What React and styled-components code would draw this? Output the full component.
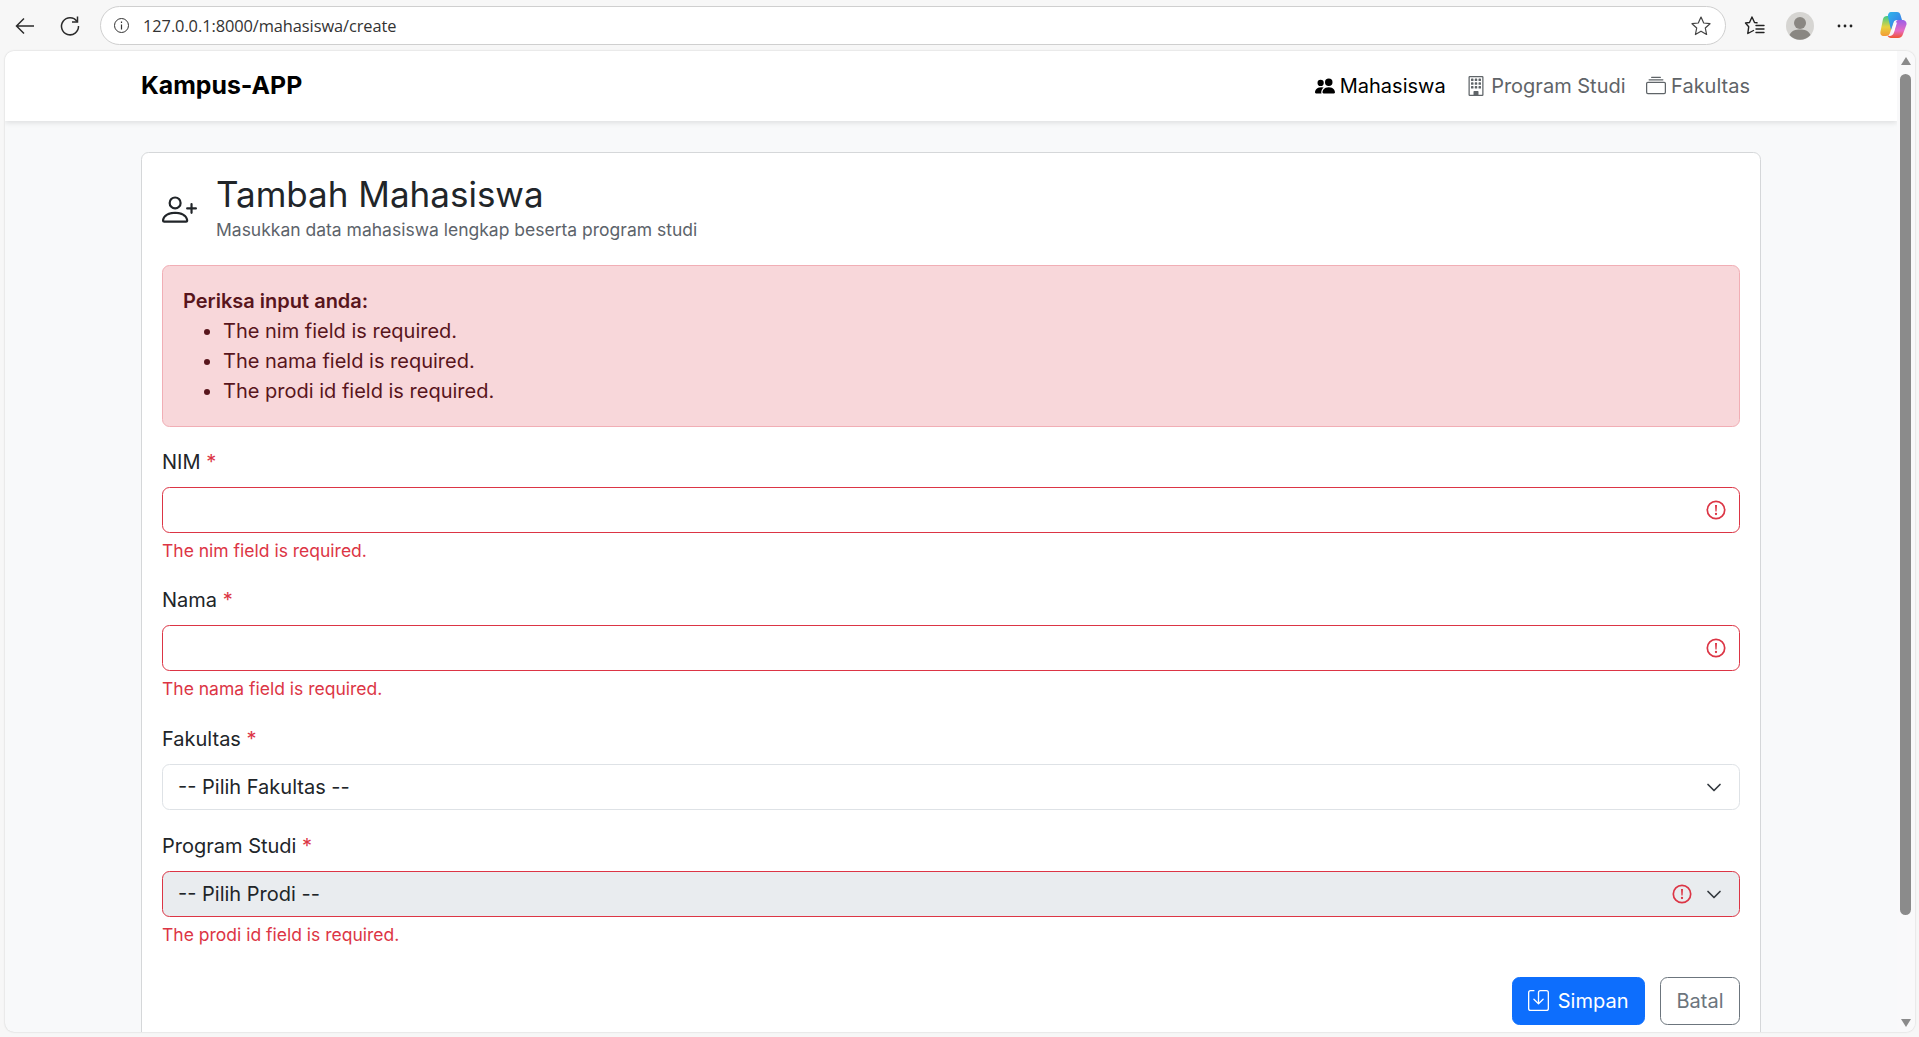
import React from 'react';
import styled, { createGlobalStyle } from 'styled-components';
import { BsPeopleFill, BsBuilding, BsCollection, BsPersonPlus, BsSave } from 'react-icons/bs';

const GlobalStyle = createGlobalStyle`
  html, body {
    margin: 0;
    height: 100%;
    overflow: hidden;
    background: #f7f7f7;
    font-family: Inter, "Liberation Sans", sans-serif;
    color: #212529;
  }
  * { box-sizing: border-box; }
`;

const Browser = styled.div`
  height: 100vh;
  display: flex;
  flex-direction: column;
  background: #f7f7f7;
`;

const Toolbar = styled.div`
  height: 51px;
  flex: none;
  display: flex;
  align-items: center;
  padding: 0 12px 0 13px;
`;

const ToolIcon = styled.span`
  display: flex;
  align-items: center;
  justify-content: center;
  flex: none;
  width: ${({ $w }) => $w || 24}px;
  margin-left: ${({ $ml }) => $ml || 0}px;
  color: #2b2b2b;
`;

const AddressBar = styled.div`
  flex: 1;
  height: 39px;
  margin-left: 18px;
  border: 1px solid #cfcfcf;
  border-radius: 20px;
  background: #fff;
  display: flex;
  align-items: center;
  padding: 0 12px 0 10px;
`;

const Url = styled.span`
  flex: 1;
  margin-left: 12px;
  font-family: "Open Sans", Roboto, sans-serif;
  font-size: 16.4px;
  letter-spacing: -0.08px;
  color: #333;
`;

const Viewport = styled.div`
  flex: 1;
  min-height: 0;
  margin: 0 4px 5px 5px;
  border-radius: 9px;
  overflow: hidden;
  display: flex;
  background: #f8f9fa;
  box-shadow: 0 0 2px rgba(0, 0, 0, 0.2);
`;

const Page = styled.div`
  flex: 1;
  min-width: 0;
  overflow: hidden;
`;

const Navbar = styled.nav`
  height: 70px;
  background: #fff;
  box-shadow: 0 2px 5px rgba(0, 0, 0, 0.1);
`;

const NavInner = styled.div`
  width: 1620px;
  height: 100%;
  margin: 0 auto;
  padding-right: 11px;
  display: flex;
  align-items: center;
  justify-content: space-between;
`;

const Brand = styled.div`
  font-size: 24.8px;
  font-weight: 700;
  color: #000;
  transform: translateY(-1px);
`;

const NavLinks = styled.div`
  display: flex;
  align-items: center;
  gap: 20.5px;
`;

const NavLink = styled.a`
  display: flex;
  align-items: center;
  gap: 5px;
  font-size: 20px;
  color: ${({ $active }) => ($active ? '#000' : '#5f6468')};
  svg { width: 20px; height: 20px; }
`;

const Main = styled.main`
  width: 1620px;
  margin: 31px auto 0;
  background: #fff;
  border: 1px solid #d5d7d9;
  border-radius: 7.5px;
  padding: 20px;
`;

const Heading = styled.div`
  display: flex;
  align-items: center;
  gap: 19px;
  margin-bottom: 21.5px;
  svg { width: 35px; height: 35px; margin-top: 3px; color: #212529; flex: none; }
`;

const Title = styled.h1`
  margin: 0 0 2px;
  font-size: 35px;
  line-height: 42px;
  font-weight: 400;
`;

const Subtitle = styled.div`
  font-size: 17.5px;
  line-height: 26.25px;
  color: #5c636a;
`;

const Alert = styled.div`
  background: #f8d7da;
  border: 1px solid #f1aeb5;
  border-radius: 7.5px;
  padding: 20px;
  color: #58151c;
  font-size: 20px;
  line-height: 30px;
  margin-bottom: 20px;
  strong { font-weight: 600; }
  ul { margin: 0; padding-left: 40px; }
`;

const Group = styled.div`
  margin-bottom: ${({ $mb }) => $mb ?? 20}px;
`;

const Label = styled.label`
  display: block;
  font-size: 20px;
  line-height: 30px;
  margin-bottom: 10px;
  span { color: #dc3545; }
`;

const FieldWrap = styled.div`
  position: relative;
  height: 46.5px;
`;

const TextInput = styled.input`
  display: block;
  width: 100%;
  height: 100%;
  border: 1px solid #dc3545;
  border-radius: 7.5px;
  background: #fff;
  outline: none;
  font: inherit;
`;

const Select = styled.select`
  display: block;
  width: 100%;
  height: 100%;
  appearance: none;
  padding: 0 15px;
  border: 1px solid ${({ $invalid }) => ($invalid ? '#dc3545' : '#dee2e6')};
  border-radius: 7.5px;
  background: ${({ disabled }) => (disabled ? '#e9ecef' : '#fff')};
  color: #212529;
  opacity: 1;
  outline: none;
  font-family: inherit;
  font-size: 20px;
`;

const Overlay = styled.span`
  position: absolute;
  top: 50%;
  right: ${({ $right }) => $right}px;
  transform: translateY(-50%);
  display: flex;
  pointer-events: none;
`;

const ErrorText = styled.div`
  margin-top: 5px;
  font-size: 17.5px;
  line-height: 26.25px;
  color: #dc3545;
`;

const Actions = styled.div`
  display: flex;
  justify-content: flex-end;
  gap: 15px;
`;

const Button = styled.button`
  height: 47.5px;
  display: flex;
  align-items: center;
  gap: 8.5px;
  padding: 0 15.5px;
  border-radius: 7.5px;
  border: 1px solid ${({ $primary }) => ($primary ? '#0d6efd' : '#6c757d')};
  background: ${({ $primary }) => ($primary ? '#0d6efd' : '#fff')};
  color: ${({ $primary }) => ($primary ? '#fff' : '#6c757d')};
  font-family: inherit;
  font-size: 20px;
  svg { width: 21px; height: 21px; }
`;

const Scrollbar = styled.div`
  width: 18px;
  flex: none;
  position: relative;
  display: flex;
  flex-direction: column;
  align-items: center;
  padding: 6px 4px 0 3px;
  background: #f9f9fa;
`;

const Arrow = styled.div`
  width: 0;
  height: 0;
  border-left: 5.5px solid transparent;
  border-right: 5.5px solid transparent;
  ${({ $down }) => ($down ? 'border-top: 8px solid #8b8b8b;' : 'border-bottom: 8px solid #8b8b8b;')}
  ${({ $down }) => ($down ? 'margin-top: auto; margin-bottom: 5px;' : '')}
`;

const Thumb = styled.div`
  width: 11px;
  height: 841px;
  margin-top: 9px;
  border-radius: 6px;
  background: #8b8b8b;
`;

const InvalidIcon = () => (
  <svg width="20" height="20" viewBox="0 0 20 20" fill="none">
    <circle cx="10" cy="10" r="8.700" stroke="#dc3545" strokeWidth="1.700" />
    <path d="M9 5h2l-.4 6.500h-1.200z" fill="#dc3545" />
    <circle cx="10" cy="14" r="1.150" fill="#dc3545" />
  </svg>
);

const Chevron = () => (
  <svg width="20" height="20" viewBox="0 0 20 20" fill="none">
    <path d="m4 7.500 6 6 6-6" stroke="#343a40" strokeWidth="1.700" strokeLinecap="round" strokeLinejoin="round" />
  </svg>
);

const Copilot = () => (
  <svg width="27" height="27" viewBox="0 0 27 27">
    <defs>
      <linearGradient id="cpA" x1="0" y1="0" x2="1" y2="1">
        <stop offset="0" stopColor="#2fb6e9" />
        <stop offset="1" stopColor="#3c6fe8" />
      </linearGradient>
      <linearGradient id="cpB" x1="0" y1="0" x2="0" y2="1">
        <stop offset="0" stopColor="#3fc98b" />
        <stop offset="0.55" stopColor="#e7d23f" />
        <stop offset="1" stopColor="#f39a35" />
      </linearGradient>
      <linearGradient id="cpC" x1="0" y1="0" x2="0" y2="1">
        <stop offset="0" stopColor="#9a5fe8" />
        <stop offset="0.6" stopColor="#e66bc4" />
        <stop offset="1" stopColor="#f0542f" />
      </linearGradient>
    </defs>
    <path d="M7 4h6c1.500 0 2 1 1.500 2.500L10 21c-.6 2-2 3-4 3H4c-3 0-4-2-3.500-4.500L3 7c.5-2 2-3 4-3z" fill="url(#cpB)" />
    <path d="M11 0h6c2 0 3 1 3.500 3L22 8h-5c-2 0-3 1-3.500 2.500L11 18 8 5c-.5-3 1-5 3-5z" fill="url(#cpA)" />
    <path d="M18 8h4c3 0 5 2 4.500 4.500L23 22c-.7 2.500-2.500 4-5 4h-7c-2 0-3-1-3.500-2.500 3 1 5.500 0 6.500-3L16 10c.3-1 1-2 2-2z" fill="url(#cpC)" />
    <path d="M12.500 20c1-3 2-6 3-9.500h1.500c-1 3.500-2 6.500-3 9.500z" fill="#fff" />
  </svg>
);

const BrowserBar = () => (
  <Toolbar>
    <ToolIcon $w={24}>
      <svg width="22" height="22" viewBox="0 0 22 22" fill="none" stroke="#2b2b2b" strokeWidth="1.500">
        <path d="M20 11H3M10 3.500 2.500 11l7.500 7.500" />
      </svg>
    </ToolIcon>
    <ToolIcon $w={24} $ml={21}>
      <svg width="22" height="22" viewBox="0 0 22 22" fill="none" stroke="#2b2b2b" strokeWidth="1.500">
        <path d="M18 6.500A8.500 8.500 0 1 0 19.500 11" />
        <path d="M18.500 1.500V7H13" />
      </svg>
    </ToolIcon>
    <AddressBar>
      <ToolIcon $w={20}>
        <svg width="17" height="17" viewBox="0 0 17 17" fill="none" stroke="#333">
          <circle cx="8.500" cy="8.500" r="7" />
          <path d="M8.500 7.500V12.500M8.500 4.500v1.500" strokeWidth="1.200" />
        </svg>
      </ToolIcon>
      <Url>127.0.0.1:8000/mahasiswa/create</Url>
      <ToolIcon $w={24}>
        <svg width="22" height="22" viewBox="0 0 22 22" fill="none" stroke="#444" strokeWidth="1.200" strokeLinejoin="round">
          <path d="m11 2 2.700 6 6.300.7-4.700 4.300 1.300 6.500L11 16.200 5.400 19.500 6.700 13 2 8.700 8.300 8z" />
        </svg>
      </ToolIcon>
    </AddressBar>
    <ToolIcon $w={24} $ml={17}>
      <svg width="22" height="22" viewBox="0 0 22 22" fill="none" stroke="#222" strokeWidth="1.400" strokeLinejoin="round" strokeLinecap="round">
        <path d="M13 7.800 10.500 7.500 8 2 5.500 7.500 1.500 8 4.700 11.800 3.800 18.500 9.500 15.500" />
        <path d="M12 10.500h8M12 14h8M12 17.500h8" />
      </svg>
    </ToolIcon>
    <ToolIcon $w={30} $ml={18}>
      <svg width="28" height="28" viewBox="0 0 28 28">
        <circle cx="14" cy="14" r="14" fill="#d6d5d2" />
        <circle cx="14" cy="11" r="6" fill="#8a8782" />
        <path d="M3.500 23c2-4.500 6-5.500 10.500-5.500S22.500 18.500 24.500 23A14 14 0 0 1 3.500 23z" fill="#8a8782" />
      </svg>
    </ToolIcon>
    <ToolIcon $w={24} $ml={18}>
      <svg width="18" height="4" viewBox="0 0 18 4" fill="#222">
        <circle cx="3" cy="2" r="1.400" />
        <circle cx="9" cy="2" r="1.400" />
        <circle cx="15" cy="2" r="1.400" />
      </svg>
    </ToolIcon>
    <ToolIcon $w={28} $ml={22}>
      <Copilot />
    </ToolIcon>
  </Toolbar>
);

const App = () => (
  <Browser>
    <GlobalStyle />
    <BrowserBar />
    <Viewport>
      <Page>
        <Navbar>
          <NavInner>
            <Brand>Kampus-APP</Brand>
            <NavLinks>
              <NavLink $active><BsPeopleFill />Mahasiswa</NavLink>
              <NavLink><BsBuilding />Program Studi</NavLink>
              <NavLink><BsCollection />Fakultas</NavLink>
            </NavLinks>
          </NavInner>
        </Navbar>
        <Main>
          <Heading>
            <BsPersonPlus />
            <div>
              <Title>Tambah Mahasiswa</Title>
              <Subtitle>Masukkan data mahasiswa lengkap beserta program studi</Subtitle>
            </div>
          </Heading>
          <Alert>
            <strong>Periksa input anda:</strong>
            <ul>
              <li>The nim field is required.</li>
              <li>The nama field is required.</li>
              <li>The prodi id field is required.</li>
            </ul>
          </Alert>
          <Group>
            <Label>NIM <span>*</span></Label>
            <FieldWrap>
              <TextInput />
              <Overlay $right={14}><InvalidIcon /></Overlay>
            </FieldWrap>
            <ErrorText>The nim field is required.</ErrorText>
          </Group>
          <Group $mb={21.5}>
            <Label>Nama <span>*</span></Label>
            <FieldWrap>
              <TextInput />
              <Overlay $right={14}><InvalidIcon /></Overlay>
            </FieldWrap>
            <ErrorText>The nama field is required.</ErrorText>
          </Group>
          <Group $mb={20.5}>
            <Label>Fakultas <span>*</span></Label>
            <FieldWrap>
              <Select defaultValue="">
                <option value="">-- Pilih Fakultas --</option>
              </Select>
              <Overlay $right={16}><Chevron /></Overlay>
            </FieldWrap>
          </Group>
          <Group $mb={28.5}>
            <Label>Program Studi <span>*</span></Label>
            <FieldWrap>
              <Select disabled $invalid defaultValue="">
                <option value="">-- Pilih Prodi --</option>
              </Select>
              <Overlay $right={48}><InvalidIcon /></Overlay>
              <Overlay $right={16}><Chevron /></Overlay>
            </FieldWrap>
            <ErrorText>The prodi id field is required.</ErrorText>
          </Group>
          <Actions>
            <Button $primary><BsSave />Simpan</Button>
            <Button>Batal</Button>
          </Actions>
        </Main>
      </Page>
      <Scrollbar>
        <Arrow />
        <Thumb />
        <Arrow $down />
      </Scrollbar>
    </Viewport>
  </Browser>
);

export default App;
